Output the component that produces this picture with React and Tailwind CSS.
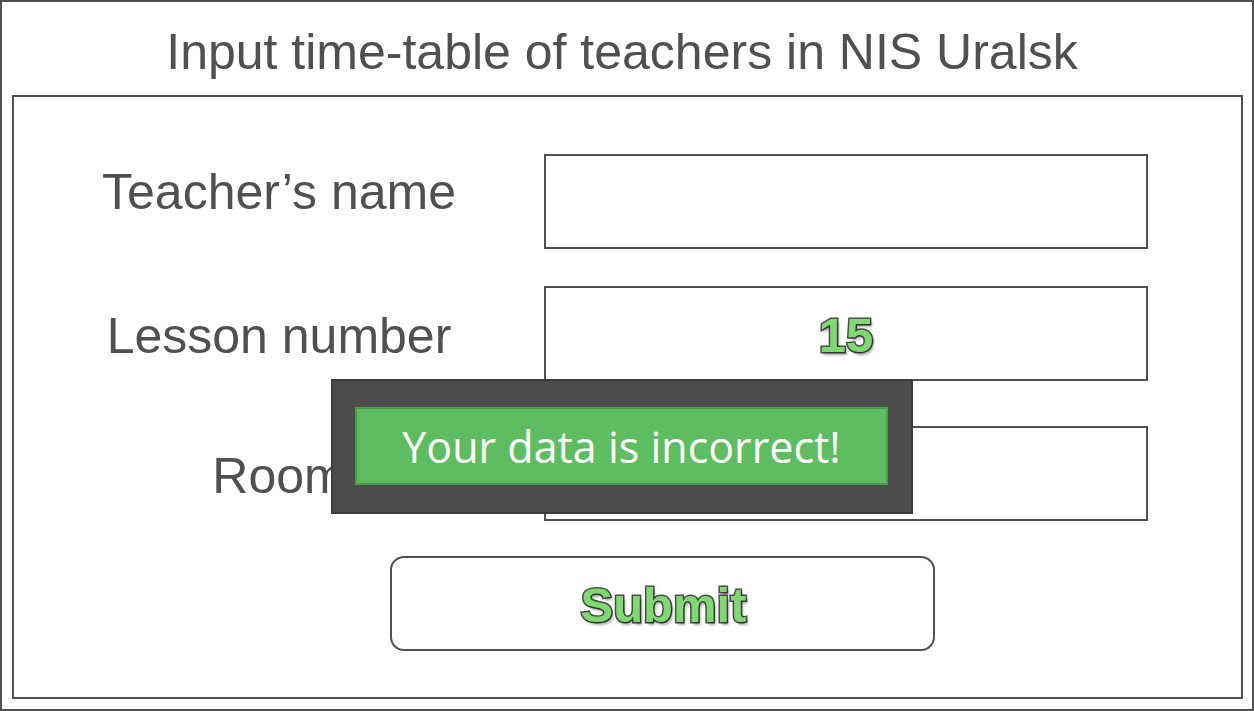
import React from "react";

const arial = "font-['Liberation_Sans',Arial,sans-serif]";
const outlined =
  "font-bold text-[49px] text-[#7fd971] [-webkit-text-stroke:3px_#4d4d4d] [paint-order:stroke_fill] [text-shadow:2px_3px_3px_rgba(0,0,0,0.35)]";

function Row({ label, labelPad, children, className }) {
  return (
    <div className={`flex h-[95px] ${className}`}>
      <div className={`w-[530px] flex items-center justify-center ${labelPad}`}>
        <span className="text-[50px] text-[#505050]">{label}</span>
      </div>
      <div className="w-[604px] h-[95px] border-2 border-[#505050] bg-white flex items-center justify-center">
        {children}
      </div>
    </div>
  );
}

export default function App() {
  return (
    <div className={`relative w-[1254px] h-[711px] bg-white border-2 border-[#505050] flex flex-col ${arial}`}>
      {/* Title */}
      <div className="h-[93px] pt-[22px] pr-[10px] text-center text-[50px] leading-[56px] text-[#505050]">
        Input time-table of teachers in NIS Uralsk
      </div>

      {/* Form frame */}
      <div className="ml-[10px] w-[1231px] h-[604px] border-2 border-[#505050]">
        <Row label="Teacher’s name" labelPad="pb-[18px]" className="mt-[57px]" />
        <Row label="Lesson number" labelPad="pt-[6px]" className="mt-[37px]">
          <span className={`${outlined} leading-none pt-[4px]`}>15</span>
        </Row>
        <Row label="Room" labelPad="pt-[6px]" className="mt-[45px]" />

        <div className="mt-[35px] ml-[376px] w-[545px] h-[95px] border-2 border-[#505050] rounded-[14px] flex items-center justify-center">
          <span className={`${outlined} leading-none pt-[4px] pl-[2px]`}>Submit</span>
        </div>
      </div>

      {/* Error popup */}
      <div className="absolute left-[329px] top-[377px] w-[582px] h-[135px] bg-[#4d4d4d] border-2 border-[#3c3c3c] pt-[26px] pl-[22px]">
        <div className="w-[533px] h-[78px] bg-[#5ebd61] border-2 border-[#4a9c4c] flex items-center justify-center">
          <span className="font-['Open_Sans',sans-serif] text-[43px] leading-none text-white">
            Your data is incorrect!
          </span>
        </div>
      </div>
    </div>
  );
}
